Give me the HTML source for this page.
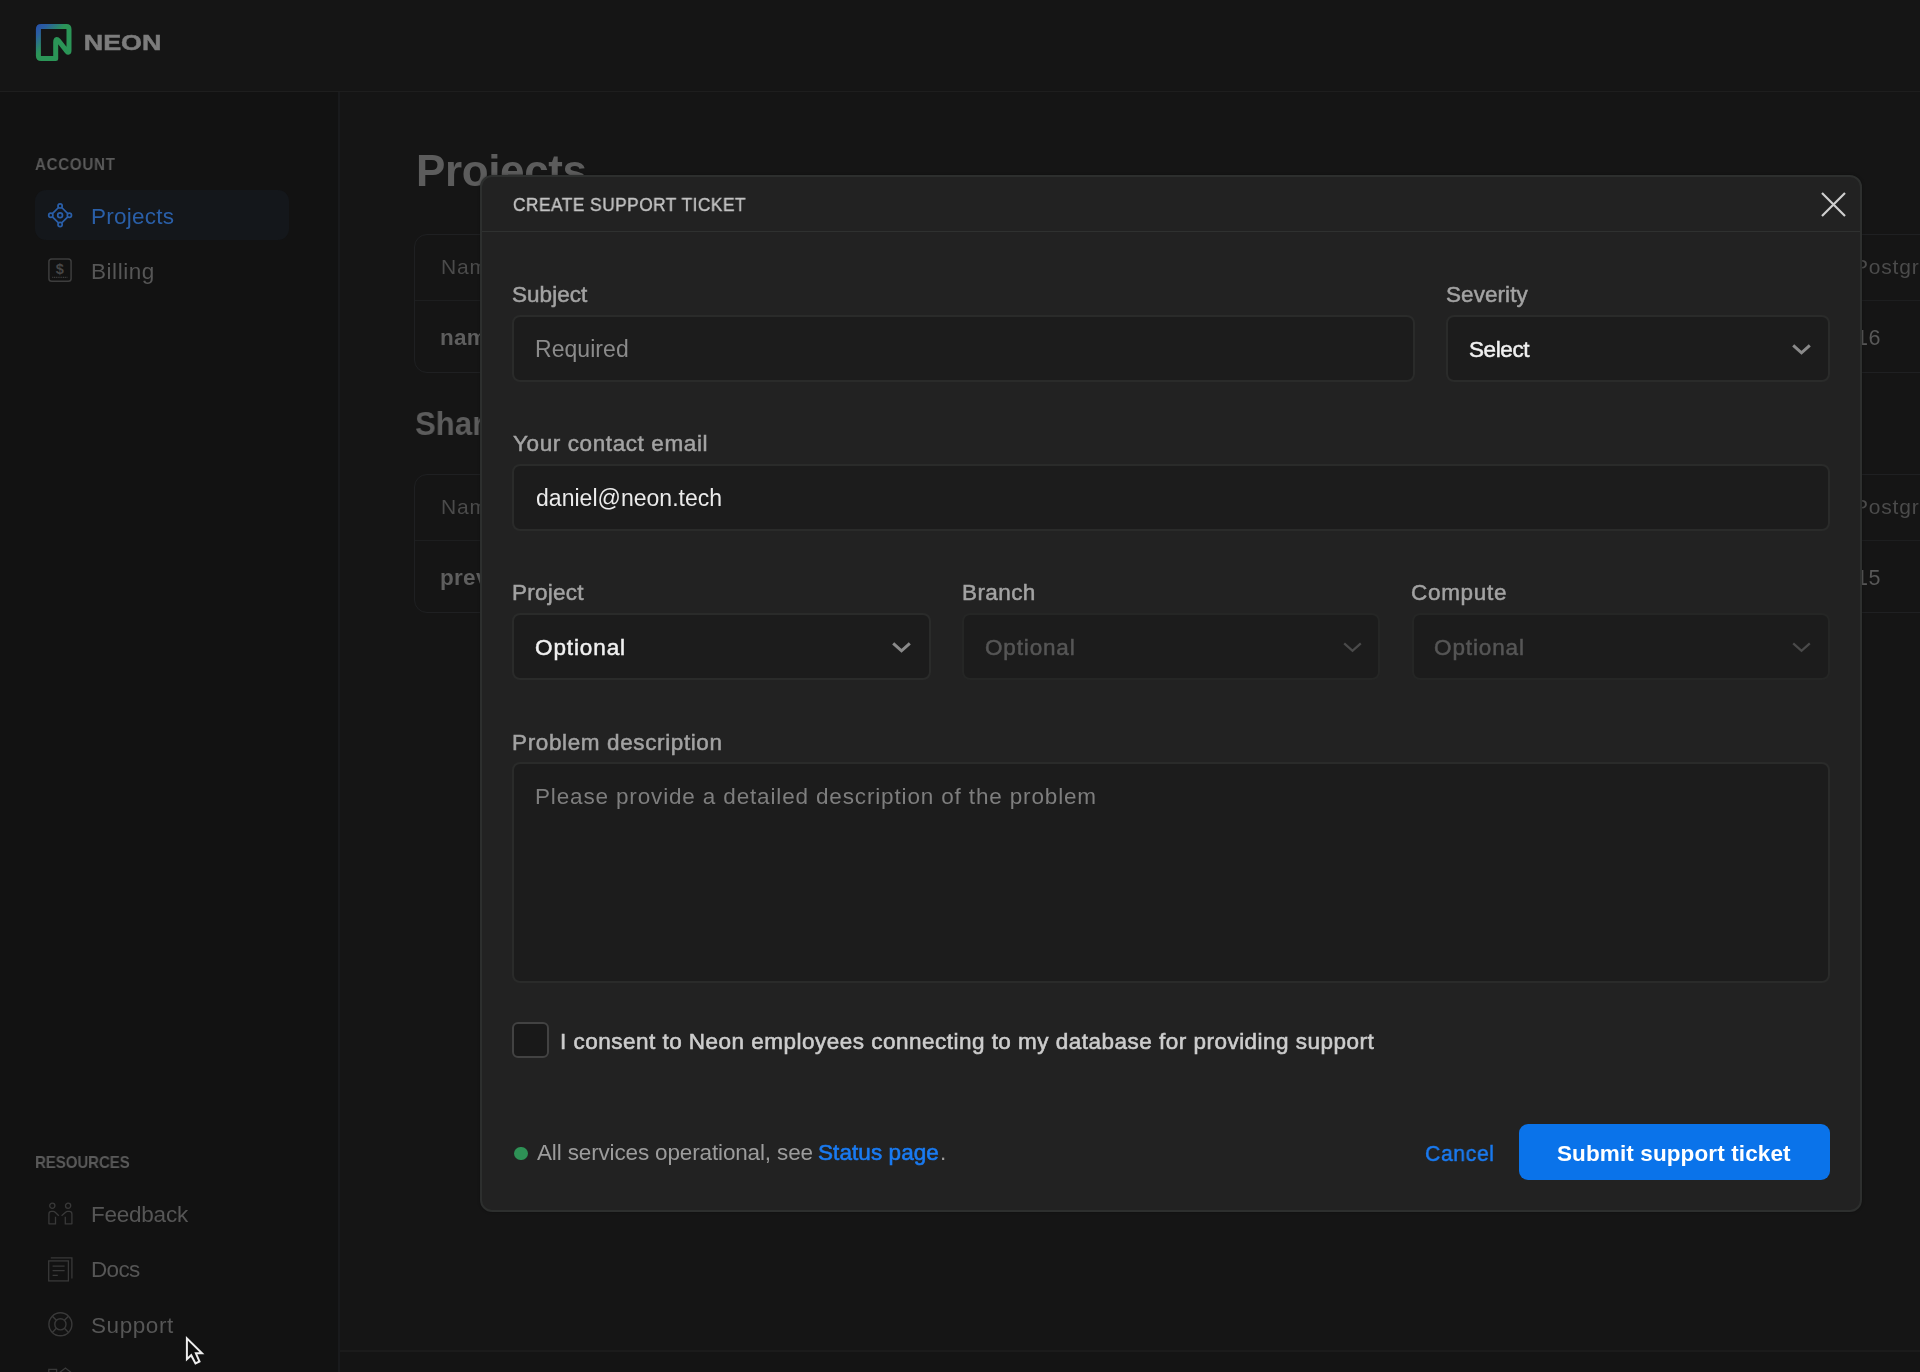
<!DOCTYPE html>
<html lang="en">
<head>
<meta charset="utf-8">
<title>Neon Console - Create support ticket</title>
<style>
*{box-sizing:border-box;margin:0;padding:0}
html,body{width:1920px;height:1372px;overflow:hidden;background:#151515}
body{font-family:"Liberation Sans",sans-serif;color:#aaa;position:relative}
.t{will-change:transform;position:absolute;white-space:pre;line-height:1;display:block}
svg{position:absolute;overflow:visible}
/* page chrome (dimmed by overlay) */
#topbar{position:absolute;left:0;top:0;width:1920px;height:92px;background:#151515;border-bottom:1px solid #1e1e1e}
#sidebar{position:absolute;left:0;top:92px;width:340px;height:1280px;background:#121212;border-right:2px solid #191a1c}
#main{position:absolute;left:340px;top:92px;width:1580px;height:1280px;background:#151515;overflow:hidden}
#footline{position:absolute;left:340px;top:1350px;width:1580px;height:22px;background:#141414;border-top:2px solid #1b1b1b}
#navsel{position:absolute;left:35px;top:190px;width:254px;height:50px;border-radius:11px;background:#14171b}
.card{position:absolute;left:414px;width:1600px;height:139px;border:1px solid #1f2022;border-radius:13px;background:#151515}
.card i{position:absolute;left:0;right:0;top:65px;height:1px;background:#1d1e1f;display:block}
/* modal */
#modal{position:absolute;left:480px;top:175px;width:1382px;height:1037px;background:#222222;border:2px solid #2d2f2e;border-radius:12px;box-shadow:0 0 3px rgba(0,0,0,.35)}
#mhead{position:absolute;left:482px;top:231px;width:1378px;height:1px;background:#2f3130}
.inp{position:absolute;height:67px;background:#1c1c1c;border:2px solid #2a2b2a;border-radius:8px}
.inp.dis{background:#1c1c1c;border-color:#252625}
#cb{position:absolute;left:512px;top:1022px;width:37px;height:36px;border-radius:6px;background:#191919;border:2px solid #424242}
#dot{position:absolute;left:514.4px;top:1146.8px;width:13.6px;height:13.6px;border-radius:50%;background:#2e9256}
#btn{position:absolute;left:1519px;top:1124px;width:311px;height:56px;border-radius:9px;background:#0a73ea}
</style>
</head>
<body>
<div id="topbar"></div>
<div id="sidebar"></div>
<div id="main"></div>
<div id="footline"></div>
<div id="navsel"></div>

<!-- Neon logo -->
<svg style="left:36px;top:24px" width="36" height="38" viewBox="36 24 36 38">
  <defs><linearGradient id="lg" x1="0" y1="0" x2="1" y2="1"><stop offset="0" stop-color="#2855a8"/><stop offset="0.12" stop-color="#2a5fa0"/><stop offset="0.42" stop-color="#2b9557"/><stop offset="1" stop-color="#2b9557"/></linearGradient></defs>
  <path d="M55.7 58.6H41.2Q38.4 58.6 38.4 55.8V29.2Q38.4 26.4 41.2 26.4H66.2Q69 26.4 69 29.2V50.5Q69 53.6 66.8 51.2L59 41.2Q55.7 37.6 55.7 42.2Z" fill="none" stroke="url(#lg)" stroke-width="5" stroke-linejoin="round"/>
</svg>

<!-- sidebar icons -->
<svg style="left:48px;top:203px" width="24" height="24" viewBox="0 0 24 24" fill="none" stroke="#2a5fa9" stroke-width="1.7">
  <circle cx="12.1" cy="2.9" r="2.1"/><circle cx="21.4" cy="12.2" r="2.1"/><circle cx="12.1" cy="21.5" r="2.1"/><circle cx="2.8" cy="12.2" r="2.1"/>
  <path d="M10.5 4.5L4.4 10.6M13.7 4.5L19.8 10.6M4.4 13.8L10.5 19.9M19.8 13.8L13.7 19.9"/>
  <circle cx="12.1" cy="12.2" r="2.4"/>
</svg>
<svg style="left:48px;top:258px" width="24" height="24" viewBox="0 0 24 24" fill="none" stroke="#3d3d3d" stroke-width="1.5">
  <rect x="0.9" y="0.9" width="22.2" height="22.4" rx="2.8"/>
  <path d="M4.2 19.4h15.2" stroke-dasharray="1.1 0.7" stroke-width="1.3"/>
  <text x="11.9" y="16.4" style="font-family:'Liberation Sans',sans-serif;font-size:14.5px;font-weight:700" text-anchor="middle" fill="#474747" stroke="none">$</text>
</svg>
<svg style="left:47.6px;top:1203px" width="25" height="22" viewBox="0 0 25 22" fill="none" stroke="#393939" stroke-width="1.3">
  <circle cx="4.3" cy="2.8" r="2.6"/><circle cx="20.1" cy="2.8" r="2.6"/>
  <path d="M0.9 21.2V11Q0.9 8.4 3.5 8.4H5.2Q6.3 8.4 7.2 9.3L10.8 12.7M0.9 20.8H7.5V13.8"/>
  <path d="M23.9 21.2V11Q23.9 8.4 21.3 8.4H19.6Q18.5 8.4 17.6 9.3L13.6 12.7M23.9 20.8H17.3V13.8"/>
</svg>
<svg style="left:47.6px;top:1256.6px" width="25" height="25" viewBox="0 0 25 25" fill="none" stroke="#393939" stroke-width="1.3">
  <path d="M2.8 0.9H23.9V21.4"/>
  <rect x="0.7" y="3.9" width="19.7" height="20"/>
  <path d="M4.6 9.1H16.6M4.6 13.7H16.6M4.6 18.3H9.8"/>
</svg>
<svg style="left:47.6px;top:1312px" width="25" height="25" viewBox="0 0 25 25" fill="none" stroke="#393939" stroke-width="1.4">
  <circle cx="12.4" cy="12.3" r="11.5"/><circle cx="12.4" cy="12.3" r="5.6"/>
  <path d="M4.3 4.2L8.4 8.3M20.5 4.2L16.4 8.3M4.3 20.4L8.4 16.3M20.5 20.4L16.4 16.3"/>
</svg>
<svg style="left:47.6px;top:1367px" width="25" height="6" viewBox="0 0 25 6" fill="none" stroke="#393939" stroke-width="1.3">
  <path d="M0.8 6V2.4H8.6V6M11 6L17.4 1L23.8 6"/>
</svg>

<!-- main content cards -->
<div class="card" style="top:234px"><i></i></div>
<div class="card" style="top:474px"><i></i></div>

<span class="t" id="neon" style="left:83.80px;top:33px;font-size:21.4px;color:#7d7d7d;font-weight:700;transform:scaleX(1.2569);transform-origin:1.00px 50%;-webkit-text-stroke:0.5px #7d7d7d;">NEON</span>
<span class="t" id="account" style="left:35.30px;top:156px;font-size:16.2px;color:#5a5a5a;font-weight:700;transform:scaleX(0.9300);transform-origin:0.00px 50%;letter-spacing:0.830px;">ACCOUNT</span>
<span class="t" id="navproj" style="left:91.20px;top:206px;font-size:22.5px;color:#2a5fa8;letter-spacing:0.239px;">Projects</span>
<span class="t" id="navbill" style="left:91.20px;top:261px;font-size:22.5px;color:#565656;letter-spacing:0.547px;">Billing</span>
<span class="t" id="resources" style="left:34.70px;top:1154px;font-size:16.2px;color:#5a5a5a;font-weight:700;transform:scaleX(0.9300);transform-origin:1.00px 50%;letter-spacing:-0.097px;">RESOURCES</span>
<span class="t" id="navfeed" style="left:90.90px;top:1204px;font-size:22.5px;color:#565656;letter-spacing:-0.237px;">Feedback</span>
<span class="t" id="navdocs" style="left:90.90px;top:1259px;font-size:22.5px;color:#565656;letter-spacing:-0.637px;">Docs</span>
<span class="t" id="navsupp" style="left:90.60px;top:1315px;font-size:22.5px;color:#565656;letter-spacing:0.574px;">Support</span>
<span class="t" id="navrel" style="left:91.20px;top:1370px;font-size:22.5px;color:#565656;letter-spacing:0.9px;">Release notes</span>
<span class="t" id="h1" style="left:415.50px;top:149px;font-size:44px;color:#5c5c5c;font-weight:700;letter-spacing:-0.381px;">Projects</span>
<span class="t" id="th1" style="left:440.90px;top:256px;font-size:21px;color:#4b4b4b;letter-spacing:0.8px;">Name</span>
<span class="t" id="td1" style="left:440.40px;top:327px;font-size:22.5px;color:#5e5e5e;font-weight:700;letter-spacing:0.3px;">name</span>
<span class="t" id="h2" style="left:414.80px;top:407px;font-size:33.5px;color:#5c5c5c;font-weight:700;transform:scaleX(0.9300);transform-origin:0.00px 50%;">Shared with me</span>
<span class="t" id="th2" style="left:440.90px;top:496px;font-size:21px;color:#4b4b4b;letter-spacing:0.8px;">Name</span>
<span class="t" id="td2" style="left:440.40px;top:567px;font-size:22.5px;color:#5e5e5e;font-weight:700;letter-spacing:0.3px;">preview</span>
<span class="t" id="thr1" style="left:1854.20px;top:256px;font-size:21px;color:#4b4b4b;letter-spacing:0.8px;">Postgres version</span>
<span class="t" id="tdr1" style="left:1855.60px;top:328px;font-size:21.5px;color:#585858;letter-spacing:0.5px;">16</span>
<span class="t" id="thr2" style="left:1854.20px;top:496px;font-size:21px;color:#4b4b4b;letter-spacing:0.8px;">Postgres version</span>
<span class="t" id="tdr2" style="left:1855.60px;top:568px;font-size:21.5px;color:#585858;letter-spacing:0.5px;">15</span>

<!-- modal -->
<div id="modal"></div>
<div id="mhead"></div>
<svg style="left:1821px;top:192px" width="25" height="25" viewBox="0 0 25 25" fill="none" stroke="#cfcfcf" stroke-width="2.2">
  <path d="M1 1L24 24M24 1L1 24"/>
</svg>

<div class="inp" style="left:512px;top:315px;width:903px"></div>
<div class="inp" style="left:1446px;top:315px;width:384px"></div>
<div class="inp" style="left:512px;top:464px;width:1318px"></div>
<div class="inp" style="left:512px;top:613px;width:419px"></div>
<div class="inp dis" style="left:962px;top:613px;width:418px"></div>
<div class="inp dis" style="left:1412px;top:613px;width:418px"></div>
<div class="inp" style="left:512px;top:762px;width:1318px;height:221px"></div>

<svg style="left:1792px;top:344px" width="19" height="11" viewBox="0 0 19 11" fill="none" stroke="#8a8a8a" stroke-width="3"><path d="M1.2 1.4L9.5 8.8L17.8 1.4"/></svg>
<svg style="left:892px;top:641.5px" width="19" height="11" viewBox="0 0 19 11" fill="none" stroke="#8a8a8a" stroke-width="3"><path d="M1.2 1.4L9.5 8.8L17.8 1.4"/></svg>
<svg style="left:1342.5px;top:641.5px" width="19" height="11" viewBox="0 0 19 11" fill="none" stroke="#4a4a4a" stroke-width="2.3"><path d="M1.2 1.4L9.5 8.8L17.8 1.4"/></svg>
<svg style="left:1791.5px;top:641.5px" width="19" height="11" viewBox="0 0 19 11" fill="none" stroke="#4a4a4a" stroke-width="2.3"><path d="M1.2 1.4L9.5 8.8L17.8 1.4"/></svg>

<div id="cb"></div>
<div id="dot"></div>
<div id="btn"></div>

<span class="t" id="mtitle" style="left:512.80px;top:196px;font-size:18.8px;color:#c2c2c2;transform:scaleX(0.9200);transform-origin:0.00px 50%;letter-spacing:0.547px;-webkit-text-stroke:0.4px #c2c2c2;">CREATE SUPPORT TICKET</span>
<span class="t" id="lsubject" style="left:512.05px;top:284px;font-size:22.5px;color:#a3a3a3;-webkit-text-stroke:0.5px #a3a3a3;letter-spacing:0.034px;">Subject</span>
<span class="t" id="phreq" style="left:535.25px;top:338px;font-size:23px;color:#8b8b8b;letter-spacing:0.051px;">Required</span>
<span class="t" id="lsev" style="left:1446.35px;top:284px;font-size:22.5px;color:#a3a3a3;-webkit-text-stroke:0.5px #a3a3a3;letter-spacing:0.068px;">Severity</span>
<span class="t" id="vselect" style="left:1469.05px;top:339px;font-size:22.5px;color:#f1f1f1;-webkit-text-stroke:0.5px #f1f1f1;letter-spacing:-0.397px;">Select</span>
<span class="t" id="lemail" style="left:512.95px;top:433px;font-size:22.5px;color:#a3a3a3;-webkit-text-stroke:0.5px #a3a3a3;letter-spacing:0.601px;">Your contact email</span>
<span class="t" id="vemail" style="left:535.70px;top:487px;font-size:23px;color:#ebebeb;letter-spacing:0.022px;">daniel@neon.tech</span>
<span class="t" id="lproj" style="left:512.35px;top:582px;font-size:22.5px;color:#a3a3a3;-webkit-text-stroke:0.5px #a3a3a3;letter-spacing:0.254px;">Project</span>
<span class="t" id="vproj" style="left:535.35px;top:637px;font-size:22.5px;color:#f1f1f1;-webkit-text-stroke:0.5px #f1f1f1;letter-spacing:0.899px;">Optional</span>
<span class="t" id="lbranch" style="left:962.05px;top:582px;font-size:22.5px;color:#a3a3a3;-webkit-text-stroke:0.5px #a3a3a3;letter-spacing:0.405px;">Branch</span>
<span class="t" id="vbranch" style="left:985.05px;top:637px;font-size:22.5px;color:#565656;-webkit-text-stroke:0.5px #565656;letter-spacing:0.842px;">Optional</span>
<span class="t" id="lcomp" style="left:1411.15px;top:582px;font-size:22.5px;color:#a3a3a3;-webkit-text-stroke:0.5px #a3a3a3;letter-spacing:0.686px;">Compute</span>
<span class="t" id="vcomp" style="left:1434.35px;top:637px;font-size:22.5px;color:#565656;-webkit-text-stroke:0.5px #565656;letter-spacing:0.885px;">Optional</span>
<span class="t" id="lprob" style="left:512.35px;top:732px;font-size:22.5px;color:#a3a3a3;-webkit-text-stroke:0.5px #a3a3a3;letter-spacing:0.621px;">Problem description</span>
<span class="t" id="phprob" style="left:535.10px;top:786px;font-size:22.5px;color:#7e7e7e;letter-spacing:0.849px;">Please provide a detailed description of the problem</span>
<span class="t" id="lconsent" style="left:560.25px;top:1031px;font-size:22.5px;color:#cdcdcd;-webkit-text-stroke:0.5px #cdcdcd;letter-spacing:0.484px;-webkit-text-stroke-width:0.6px;">I consent to Neon employees connecting to my database for providing support</span>
<span class="t" id="status" style="left:536.50px;top:1142px;font-size:22.5px;color:#9c9c9c;letter-spacing:-0.147px;">All services operational, see</span>
<span class="t" id="statuslink" style="left:818.25px;top:1142px;font-size:22.5px;color:#1a7bf2;-webkit-text-stroke:0.5px #1a7bf2;letter-spacing:0.072px;-webkit-text-stroke-width:0.6px;">Status page</span>
<span class="t" id="statusdot" style="left:939.80px;top:1142px;font-size:22.5px;color:#9c9c9c;">.</span>
<span class="t" id="cancel" style="left:1425.35px;top:1143px;font-size:22.5px;color:#1a7bf2;transform:scaleX(0.9400);transform-origin:1.00px 50%;-webkit-text-stroke:0.5px #1a7bf2;letter-spacing:0.654px;">Cancel</span>
<span class="t" id="submit" style="left:1557.30px;top:1143px;font-size:22.5px;color:#ffffff;font-weight:700;letter-spacing:0.112px;">Submit support ticket</span>

<!-- mouse cursor -->
<svg style="left:180px;top:1330px" width="30" height="42" viewBox="180 1330 30 42">
  <path d="M186.9 1338.3V1359.2L191.2 1355.2L195.5 1363.4L199.5 1361.5L195.9 1353.3H202Z" fill="#0e0e0e" stroke="#ededed" stroke-width="2" stroke-linejoin="miter"/>
</svg>
</body>
</html>
